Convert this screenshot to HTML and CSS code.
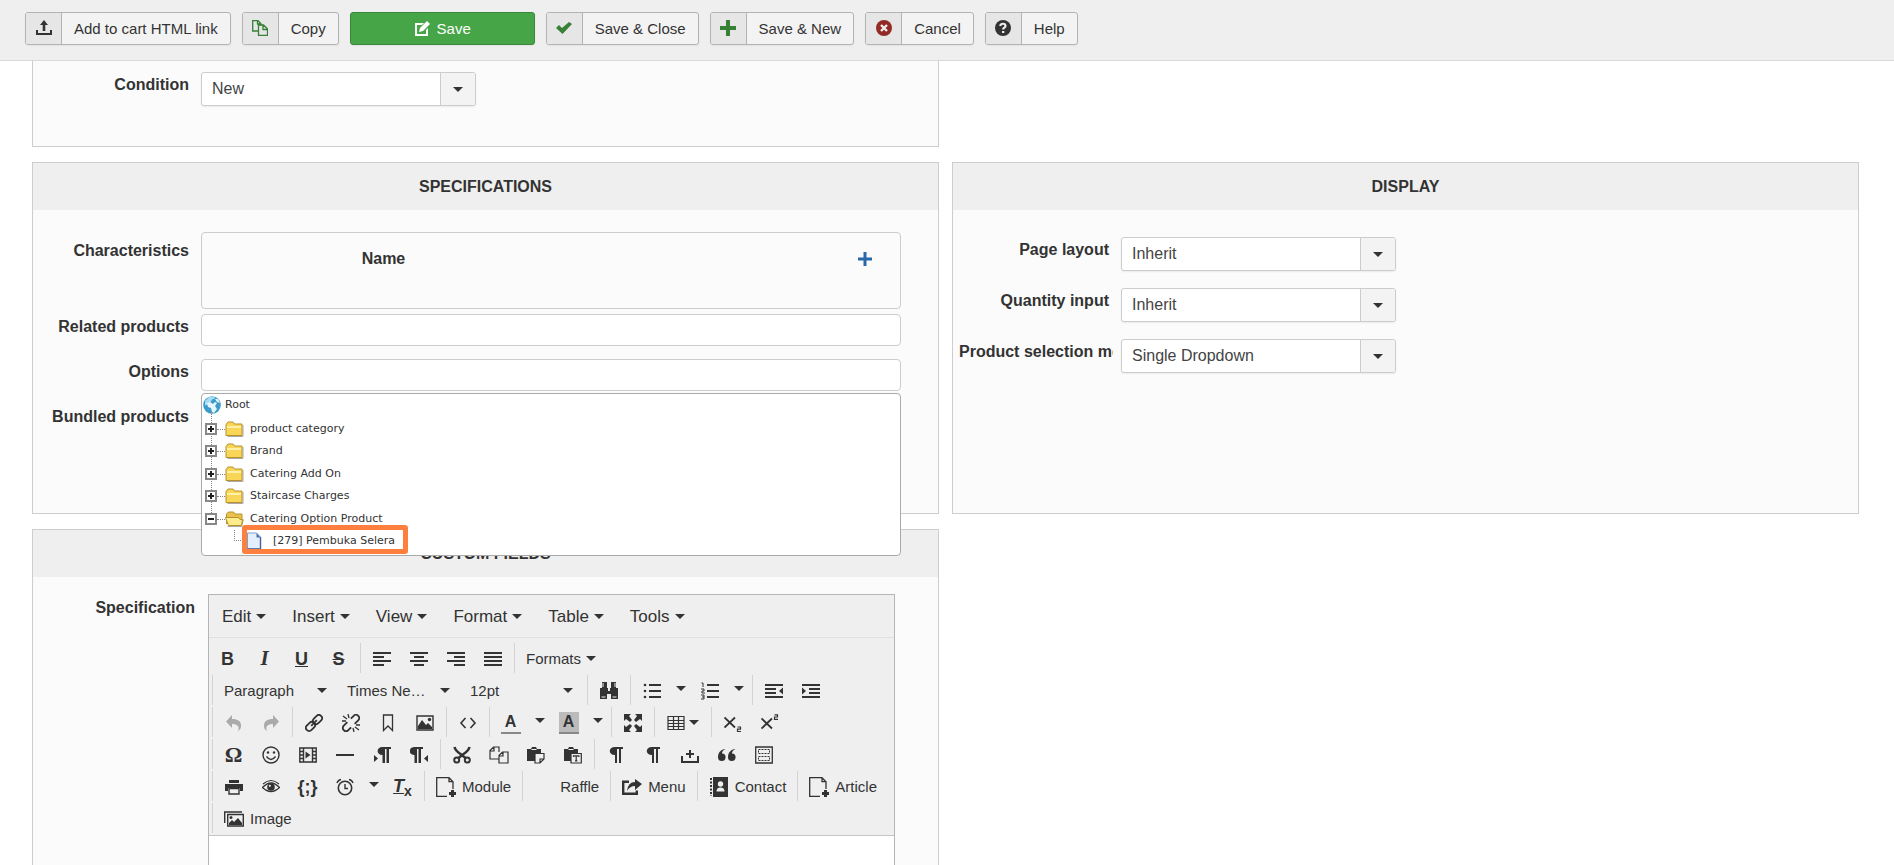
FILE: index.html
```html
<!DOCTYPE html>
<html lang="en">
<head>
<meta charset="utf-8">
<meta name="viewport" content="width=device-width, initial-scale=1">
<title>Edit product</title>
<link rel="stylesheet" href="styles.css">
</head>
<body>
<svg class="sprite" aria-hidden="true">
  <symbol id="upload" viewBox="0 0 16 16"><path d="M8 0l4 5H9.300v6H6.700V5H4zM0 10h2v3h12v-3h2v5H0z"/></symbol>
  <symbol id="copy" viewBox="0 0 16 16"><path d="M6 11H.7V.7H6l3 3V6M5.500.7V4H9M6.500 5h5l4 4v6.300h-9zM11 5v4.500h4.500" fill="none" stroke="currentColor" stroke-width="1.300"/></symbol>
  <symbol id="edit" viewBox="0 0 16 16"><path d="M1 2h9L8 4H3v9h9V9l2-2v8H1z"/><path d="M5 11l1-4 7-7 3 3-7 7z"/></symbol>
  <symbol id="check" viewBox="0 0 16 16"><path d="M0 8l3-3 3 3 7-6 3 2-9.500 10z"/></symbol>
  <symbol id="plus" viewBox="0 0 16 16"><path d="M6 0h4v6h6v4h-6v6H6v-6H0V6h6z"/></symbol>
  <symbol id="cancel" viewBox="0 0 16 16"><circle cx="8" cy="8" r="8"/><path d="M5 5l6 6M11 5l-6 6" stroke="#eee" stroke-width="2.400"/></symbol>
  <symbol id="help" viewBox="0 0 16 16"><circle cx="8" cy="8" r="8"/><path d="M5.300 6C5.300 3 10.500 3 10.500 6c0 1.600-2.400 1.600-2.400 3.500" fill="none" stroke="#eee" stroke-width="2.200"/><path d="M7 11h2.300v2H7z" fill="#eee"/></symbol>
  <symbol id="add" viewBox="0 0 14 14"><path d="M5.500 0h3v5.500H14v3H8.500V14h-3V8.500H0v-3h5.500z"/></symbol>

  <symbol id="globe" viewBox="0 0 18 18"><circle cx="9" cy="9" r="8.800" fill="#3b9ccb"/><path d="M2 5l4-4 5-.5 1 2-3 1-1 2-3 3-3 1z" fill="#a9dbf2"/><path d="M4 7l3-1 3 2 2-2 2 1-2 3 2 3-3 4-2-1-1-4-3-1zM12 3l3 0 2 4-3-1z" fill="#e6f6fd"/></symbol>
  <symbol id="folder" viewBox="0 0 18 16"><path d="M2 15.500h15.500V4" fill="none" stroke="#aaa"/><path d="M.5 3.500L2.500 1h5l1.500 2h7.500v11.500H.5z" fill="#f9d658" stroke="#b8912b"/><path d="M1.500 5h14v2h-14z" fill="#fff0a5"/></symbol>
  <symbol id="folder-open" viewBox="0 0 19 16"><path d="M2.500 15.500h14l2-7" fill="none" stroke="#aaa"/><path d="M1.500 13V3l2-2h5l1.500 2h7v10" fill="#e9c14c" stroke="#b8912b"/><path d="M.5 6.500h13l1.500 2h2.500l-1 6H3.500z" fill="#ffec8a" stroke="#b8912b"/></symbol>
  <symbol id="page" viewBox="0 0 16 18"><path d="M.5 1h9l4 4v12H.5z" fill="#e3effc" stroke="#7f9fcf"/><path d="M13.500 5v12H.5" fill="none" stroke="#45629a" stroke-width="1.400"/><path d="M9.500 1v4.500h4z" fill="#4a6fae"/></symbol>

  <symbol id="al" viewBox="0 0 18 18"><path d="M0 2h18v2H0zM0 6h11v2H0zM0 10h18v2H0zM0 14h11v2H0z"/></symbol>
  <symbol id="ac" viewBox="0 0 18 18"><path d="M0 2h18v2H0zM4 6h10v2H4zM0 10h18v2H0zM4 14h10v2H4z"/></symbol>
  <symbol id="ar" viewBox="0 0 18 18"><path d="M0 2h18v2H0zM7 6h11v2H7zM0 10h18v2H0zM7 14h11v2H7z"/></symbol>
  <symbol id="aj" viewBox="0 0 18 18"><path d="M0 2h18v2H0zM0 6h18v2H0zM0 10h18v2H0zM0 14h18v2H0z"/></symbol>
  <symbol id="find" viewBox="0 0 18 18"><path d="M2 0h5v6h1v3h2V6h1V0h5v6h2v11h-7v-5H7v5H0V6h2z"/><path d="M3 1v4M15 1v4M8 7h2M1.500 15h4M12.500 15h4" stroke="#efefef"/></symbol>
  <symbol id="ul" viewBox="0 0 18 18"><path d="M6 2h12v2H6zM6 8h12v2H6zM6 14h12v2H6z"/><circle cx="2" cy="3" r="1.300"/><circle cx="2" cy="9" r="1.300"/><circle cx="2" cy="15" r="1.300"/></symbol>
  <symbol id="ol" viewBox="0 0 18 18"><path d="M6 2h12v2H6zM6 8h12v2H6zM6 14h12v2H6z"/><path d="M.5 1H2v4M0 7h3v2H1v2h3M0 13h3v4H0M1 15h2" fill="none" stroke="currentColor"/></symbol>
  <symbol id="outdent" viewBox="0 0 18 18"><path d="M0 2h18v2H0zM0 6h11v2H0zM0 10h11v2H0zM0 14h18v2H0zM18 5.500v7L14 9z"/></symbol>
  <symbol id="indent" viewBox="0 0 18 18"><path d="M0 2h18v2H0zM7 6h11v2H7zM7 10h11v2H7zM0 14h18v2H0zM0 5.500v7L4 9z"/></symbol>
  <symbol id="undo" viewBox="0 0 18 18"><path d="M7 1v4c6 0 9 2 9 7 0 2-1 4-3 5 2-5-1-7-6-7v4L1 7.500z"/></symbol>
  <symbol id="redo" viewBox="0 0 18 18"><path d="M11 1v4c-6 0-9 2-9 7 0 2 1 4 3 5-2-5 1-7 6-7v4l6-6.500z"/></symbol>
  <symbol id="link" viewBox="0 0 18 18"><g transform="rotate(-45 9 9)" fill="none" stroke="currentColor" stroke-width="1.800"><rect x="-1" y="5.800" width="10" height="6.400" rx="3"/><rect x="9" y="5.800" width="10" height="6.400" rx="3"/><path d="M5 9h8"/></g></symbol>
  <symbol id="unlink" viewBox="0 0 18 18"><g transform="rotate(-45 9 9)" fill="none" stroke="currentColor" stroke-width="1.800"><path d="M7 5.800H2a3.200 3.200 0 0 0 0 6.400h4M11 12.200h5a3.200 3.200 0 0 0 0-6.400h-4"/></g><path d="M6 0l1 4M1 2l4 3M0 7h4M12 18l-1-4M17 16l-4-3M18 11h-4" stroke="currentColor" stroke-width="1.300"/></symbol>
  <symbol id="bookmark" viewBox="0 0 18 18"><path d="M4.500 1h9v15.500L9 12l-4.500 4.500z" fill="none" stroke="currentColor" stroke-width="1.300"/></symbol>
  <symbol id="image" viewBox="0 0 18 18"><path d="M1 2h16v14H1z" fill="none" stroke="currentColor" stroke-width="1.400"/><path d="M2 15V12l4-6 4 5 2-2 4 4v2z"/><circle cx="13.500" cy="5.500" r="1.700"/></symbol>
  <symbol id="code" viewBox="0 0 18 18"><path d="M6.500 4L2 9l4.500 5M11.500 4L16 9l-4.500 5" fill="none" stroke="currentColor" stroke-width="1.600"/></symbol>
  <symbol id="full" viewBox="0 0 18 18"><path d="M0 0h7L5 2l3 4-2 2-4-3-2 2zM18 0v7l-2-2-4 3-2-2 3-4-2-2zM0 18v-7l2 2 4-3 2 2-3 4 2 2zM18 18h-7l2-2-3-4 2-2 4 3 2-2z"/></symbol>
  <symbol id="table" viewBox="0 0 18 18"><path d="M1 2.500h16v13H1zM1 6.500h16M1 9.500h16M1 12.500h16M6.500 2v13M11.500 2v13" fill="none" stroke="currentColor" stroke-width="1.200"/></symbol>
  <symbol id="sub" viewBox="0 0 18 18"><path d="M.5 3.500l10.500 10M11 3.500l-10.500 10" stroke="currentColor" stroke-width="1.800"/><path d="M13.500 13h3v2.200h-3v2.300h3.500" fill="none" stroke="currentColor" stroke-width="1.200"/></symbol>
  <symbol id="sup" viewBox="0 0 18 18"><path d="M.5 4.500l10.500 10M11 4.500l-10.500 10" stroke="currentColor" stroke-width="1.800"/><path d="M13.500.8h3V3h-3v2.300h3.500" fill="none" stroke="currentColor" stroke-width="1.200"/></symbol>
  <symbol id="smile" viewBox="0 0 18 18"><circle cx="9" cy="9" r="8" fill="none" stroke="currentColor" stroke-width="1.400"/><circle cx="6" cy="6.500" r="1.200"/><circle cx="12" cy="6.500" r="1.200"/><path d="M4.500 10.500q4.500 6 9 0" fill="none" stroke="currentColor" stroke-width="1.300"/></symbol>
  <symbol id="media" viewBox="0 0 18 18"><path d="M.8 2h16.400v14H.8zM4.500 2v14M13.500 2v14M1 5.500h3.500M1 9h3.500M1 12.500h3.500M13.500 5.500H17M13.500 9H17M13.500 12.500H17" fill="none" stroke="currentColor" stroke-width="1.400"/><path d="M6.500 5.500l5 3.500-5 3.500z"/></symbol>
  <symbol id="hr" viewBox="0 0 18 18"><path d="M0 8h18v2H0z"/></symbol>
  <symbol id="pilcrow" viewBox="0 0 18 18"><path d="M16 1v2h-2v14h-2V3h-2v14H8V9C1 9 1 1 8 1z"/></symbol>
  <symbol id="ltr" viewBox="0 0 18 18"><path d="M18 1v2h-2v14h-2.500V3H12v14H9.500V9C3 9 3 1 9.500 1zM1 9l4 3.500L1 16z"/></symbol>
  <symbol id="rtl" viewBox="0 0 18 18"><path d="M13 1v2h-2v14H8.500V3H7v14H4.500V9C-2 9-2 1 4.500 1zM18 9l-4 3.500 4 3.500z"/></symbol>
  <symbol id="cut" viewBox="0 0 18 18"><path d="M1.500 1q1 4 6 7l5 4M16.500 1q-1 4-6 7l-5 4" fill="none" stroke="currentColor" stroke-width="2.600"/><circle cx="3.700" cy="14" r="2.500" fill="none" stroke="currentColor" stroke-width="2"/><circle cx="14.300" cy="14" r="2.500" fill="none" stroke="currentColor" stroke-width="2"/></symbol>
  <symbol id="docs" viewBox="0 0 20 18"><path d="M10 13H1V4.500L4.500 1H10v5M1 5h4V1M10 9.500L13.500 6H19v11h-9zM10 10h4V6" fill="none" stroke="currentColor" stroke-width="1.200"/></symbol>
  <symbol id="paste" viewBox="0 0 18 18"><path d="M0 3h4l1-2h4l1 2h4v4H8v8H0z"/><path d="M4.500 3.500h5" stroke="#efefef"/><path d="M8 7.500h9V13l-4 4H8zM13 17v-4h4" fill="#efefef" stroke="currentColor" stroke-width="1.200"/></symbol>
  <symbol id="pastetext" viewBox="0 0 18 18"><path d="M0 3h4l1-2h4l1 2h4v4H7v8H0z"/><path d="M4.500 3.500h5" stroke="#efefef"/><path d="M7 7.500h10.300V17H7z" fill="#efefef" stroke="currentColor" stroke-width="1.200"/><path d="M9.500 11V9.800h5.400V11M12.200 10v5M11 14.800h2.400" fill="none" stroke="currentColor" stroke-width="1.200"/></symbol>
  <symbol id="nbsp" viewBox="0 0 18 18"><path d="M0 10h2v5h14v-5h2v7H0zM8 4h2v3h3v2h-3v3H8V9H5V7h3z"/></symbol>
  <symbol id="quote" viewBox="0 0 18 18"><path d="M7.500 3C5 4 4 6 4 7.500a3.800 3.800 0 1 1-4 4C0 6 3 3.500 7.500 3zM17.500 3C15 4 14 6 14 7.500a3.800 3.800 0 1 1-4 4c0-5.500 3-8 7.500-8.500z"/></symbol>
  <symbol id="template" viewBox="0 0 18 18"><path d="M.7 1h16.600v16H.7z" fill="none" stroke="currentColor" stroke-width="1.300"/><path d="M3.500 3.500h11v4h-11zM3.500 10.500h11v4h-11z" fill="none" stroke="currentColor" stroke-dasharray="2 1"/></symbol>
  <symbol id="print" viewBox="0 0 18 18"><path d="M4 2h10v3H4zM0 6h18v7h-3v-3H3v3H0z"/><path d="M4 10.500h10V16H4z" fill="#efefef" stroke="currentColor" stroke-width="1.400"/></symbol>
  <symbol id="eye" viewBox="0 0 18 18"><path d="M.5 9.500q8.500-9 17 0-8.500 8-17 0z" fill="none" stroke="currentColor" stroke-width="1.300"/><path d="M1 6q8-7 16 0" fill="none" stroke="currentColor" stroke-width="1.100"/><circle cx="9" cy="9" r="3.800"/><circle cx="7.800" cy="7.800" r="1.100" fill="#efefef"/></symbol>
  <symbol id="clock" viewBox="0 0 18 18"><circle cx="9" cy="10" r="6.700" fill="none" stroke="currentColor" stroke-width="1.600"/><path d="M9 6v4.500h3M1 5q1-3 4-3.500M17 5q-1-3-4-3.500" fill="none" stroke="currentColor" stroke-width="1.400"/></symbol>
  <symbol id="file-add" viewBox="0 0 20 20"><path d="M11 19.300H.7V.7H13l4 4V12M13 .7v4h4" fill="none" stroke="currentColor" stroke-width="1.300"/><path d="M15 13h3v2h2v3h-2v2h-3v-2h-2v-3h2z"/></symbol>
  <symbol id="share" viewBox="0 0 20 20"><path d="M7 4.700H1.200v12.100h13.600v-3.300" fill="none" stroke="currentColor" stroke-width="2.400"/><path d="M13 2l7 5-7 6V9q-5 0-8 5Q6 5 13 5z"/></symbol>
  <symbol id="contact" viewBox="0 0 20 20"><path d="M4 0h15v20H4z"/><path d="M2 1v18" stroke="currentColor" stroke-width="2" stroke-dasharray="2 1.500"/><circle cx="11.500" cy="7" r="2.700" fill="#efefef"/><path d="M7.500 14.500q0-4 4-4t4 4z" fill="#efefef"/></symbol>
  <symbol id="pictures" viewBox="0 0 20 20"><path d="M.7 14V3H18" fill="none" stroke="currentColor" stroke-width="1.400"/><path d="M3.700 5.500h15.600V17H3.700z" fill="none" stroke="currentColor" stroke-width="1.400"/><path d="M5 16v-2l3-3 2 2 4-4 4 5v2z"/><circle cx="7" cy="8.500" r="1.500"/></symbol>
</svg>

<header class="toolbar">
  <button class="btn" type="button"><span class="btn-icon"><svg><use href="#upload"/></svg></span><span class="btn-text">Add to cart HTML link</span></button>
  <button class="btn" type="button"><span class="btn-icon green"><svg><use href="#copy"/></svg></span><span class="btn-text">Copy</span></button>
  <button class="btn btn-save" type="button"><svg><use href="#edit"/></svg>Save</button>
  <button class="btn" type="button"><span class="btn-icon green"><svg><use href="#check"/></svg></span><span class="btn-text">Save &amp; Close</span></button>
  <button class="btn" type="button"><span class="btn-icon green"><svg><use href="#plus"/></svg></span><span class="btn-text">Save &amp; New</span></button>
  <button class="btn" type="button"><span class="btn-icon red"><svg><use href="#cancel"/></svg></span><span class="btn-text">Cancel</span></button>
  <button class="btn" type="button"><span class="btn-icon"><svg><use href="#help"/></svg></span><span class="btn-text">Help</span></button>
</header>

<main class="columns">
  <section class="panel panel-condition">
    <div class="row">
      <label class="label" for="condition">Condition</label>
      <div class="select"><select id="condition"><option>New</option></select><span class="select-arrow"><i class="caret"></i></span></div>
    </div>
  </section>

  <section class="panel panel-spec">
    <h2 class="panel-title">SPECIFICATIONS</h2>
    <div class="row row-tall">
      <span class="label">Characteristics</span>
      <div class="field box">
        <table class="chars"><tr><th class="chars-name">Name</th><th></th><th class="chars-add"><button class="add" type="button" aria-label="Add"><svg><use href="#add"/></svg></button></th></tr></table>
      </div>
    </div>
    <div class="row">
      <label class="label" for="related">Related products</label>
      <div class="field"><input class="text" id="related" type="text"></div>
    </div>
    <div class="row">
      <label class="label" for="options">Options</label>
      <div class="field">
        <input class="text" id="options" type="text">
        <div class="tree">
          <div class="tree-root"><svg class="globe"><use href="#globe"/></svg>Root</div>
          <ul class="tree-list">
            <li class="node"><span class="join"><i class="toggle plus"></i></span><svg class="folder"><use href="#folder"/></svg>product category</li>
            <li class="node"><span class="join"><i class="toggle plus"></i></span><svg class="folder"><use href="#folder"/></svg>Brand</li>
            <li class="node"><span class="join"><i class="toggle plus"></i></span><svg class="folder"><use href="#folder"/></svg>Catering Add On</li>
            <li class="node"><span class="join"><i class="toggle plus"></i></span><svg class="folder"><use href="#folder"/></svg>Staircase Charges</li>
            <li class="node"><span class="join"><i class="toggle"></i></span><svg class="folder"><use href="#folder-open"/></svg>Catering Option Product</li>
            <li class="node"><span class="elbow"></span><svg class="page"><use href="#page"/></svg>[279] Pembuka Selera<span class="highlight"></span></li>
          </ul>
        </div>
      </div>
    </div>
    <div class="row"><span class="label">Bundled products</span></div>
  </section>

  <section class="panel panel-display">
    <h2 class="panel-title">DISPLAY</h2>
    <div class="row row-select">
      <label class="label" for="layout">Page layout</label>
      <div class="select"><select id="layout"><option>Inherit</option></select><span class="select-arrow"><i class="caret"></i></span></div>
    </div>
    <div class="row row-select">
      <label class="label" for="quantity">Quantity input</label>
      <div class="select"><select id="quantity"><option>Inherit</option></select><span class="select-arrow"><i class="caret"></i></span></div>
    </div>
    <div class="row row-select">
      <label class="label" for="method">Product selection method</label>
      <div class="select"><select id="method"><option>Single Dropdown</option></select><span class="select-arrow"><i class="caret"></i></span></div>
    </div>
  </section>

  <section class="panel panel-custom">
    <h2 class="panel-title">CUSTOM FIELDS</h2>
    <div class="editor-row">
      <label class="label" for="spec">Specification</label>
      <div class="editor">
        <div class="menubar">
          <button type="button">Edit<i class="caret"></i></button><button type="button">Insert<i class="caret"></i></button><button type="button">View<i class="caret"></i></button><button type="button">Format<i class="caret"></i></button><button type="button">Table<i class="caret"></i></button><button type="button">Tools<i class="caret"></i></button>
        </div>
        <div class="tools">
          <div class="line line-first">
            <div class="group"><button class="ic" type="button"><b>B</b></button><button class="ic serif" type="button"><i>I</i></button><button class="ic" type="button"><u>U</u></button><button class="ic" type="button"><s>S</s></button></div>
            <div class="group"><button class="ic" type="button"><svg><use href="#al"/></svg></button><button class="ic" type="button"><svg><use href="#ac"/></svg></button><button class="ic" type="button"><svg><use href="#ar"/></svg></button><button class="ic" type="button"><svg><use href="#aj"/></svg></button></div>
            <div class="group"><button class="word" type="button">Formats<i class="caret"></i></button></div>
          </div>
          <div class="line">
            <div class="group"><button class="list" type="button">Paragraph<i class="caret"></i></button><button class="list" type="button">Times Ne…<i class="caret"></i></button><button class="list" type="button">12pt<i class="caret"></i></button></div>
            <div class="group"><button class="ic" type="button"><svg><use href="#find"/></svg></button></div>
            <div class="group"><button class="ic" type="button"><svg><use href="#ul"/></svg></button><button class="open" type="button"><i class="caret"></i></button><button class="ic" type="button"><svg><use href="#ol"/></svg></button><button class="open" type="button"><i class="caret"></i></button></div>
            <div class="group"><button class="ic" type="button"><svg><use href="#outdent"/></svg></button><button class="ic" type="button"><svg><use href="#indent"/></svg></button></div>
          </div>
          <div class="line">
            <div class="group"><button class="ic off" type="button"><svg><use href="#undo"/></svg></button><button class="ic off" type="button"><svg><use href="#redo"/></svg></button></div>
            <div class="group"><button class="ic" type="button"><svg><use href="#link"/></svg></button><button class="ic" type="button"><svg><use href="#unlink"/></svg></button><button class="ic" type="button"><svg><use href="#bookmark"/></svg></button><button class="ic" type="button"><svg><use href="#image"/></svg></button></div>
            <div class="group"><button class="ic" type="button"><svg><use href="#code"/></svg></button></div>
            <div class="group"><button class="ic" type="button"><span class="color">A</span></button><button class="open" type="button"><i class="caret"></i></button><button class="ic" type="button"><span class="color back">A</span></button><button class="open" type="button"><i class="caret"></i></button></div>
            <div class="group"><button class="ic" type="button"><svg><use href="#full"/></svg></button></div>
            <div class="group"><button class="ic wide" type="button"><svg><use href="#table"/></svg><i class="caret"></i></button></div>
            <div class="group"><button class="ic" type="button"><svg><use href="#sub"/></svg></button><button class="ic" type="button"><svg><use href="#sup"/></svg></button></div>
          </div>
          <div class="line">
            <div class="group"><button class="ic omega" type="button">Ω</button><button class="ic" type="button"><svg><use href="#smile"/></svg></button><button class="ic" type="button"><svg><use href="#media"/></svg></button><button class="ic" type="button"><svg><use href="#hr"/></svg></button><button class="ic" type="button"><svg><use href="#ltr"/></svg></button><button class="ic" type="button"><svg><use href="#rtl"/></svg></button></div>
            <div class="group"><button class="ic" type="button"><svg><use href="#cut"/></svg></button><button class="ic docs" type="button"><svg><use href="#docs"/></svg></button><button class="ic" type="button"><svg><use href="#paste"/></svg></button><button class="ic" type="button"><svg><use href="#pastetext"/></svg></button></div>
            <div class="group"><button class="ic" type="button"><svg><use href="#pilcrow"/></svg></button><button class="ic" type="button"><svg><use href="#pilcrow"/></svg></button><button class="ic" type="button"><svg><use href="#nbsp"/></svg></button><button class="ic" type="button"><svg><use href="#quote"/></svg></button><button class="ic" type="button"><svg><use href="#template"/></svg></button></div>
          </div>
          <div class="line">
            <div class="group"><button class="ic" type="button"><svg><use href="#print"/></svg></button><button class="ic" type="button"><svg><use href="#eye"/></svg></button><button class="ic braces" type="button">{;}</button><button class="ic" type="button"><svg><use href="#clock"/></svg></button><button class="open" type="button"><i class="caret"></i></button><button class="ic clear" type="button"><u><i>T</i></u><sub>x</sub></button></div>
            <div class="group"><button class="plugin" type="button"><svg><use href="#file-add"/></svg>Module</button></div>
            <div class="group"><button class="plugin" type="button"><svg></svg>Raffle</button></div>
            <div class="group"><button class="plugin" type="button"><svg><use href="#share"/></svg>Menu</button></div>
            <div class="group"><button class="plugin" type="button"><svg><use href="#contact"/></svg>Contact</button></div>
            <div class="group"><button class="plugin" type="button"><svg><use href="#file-add"/></svg>Article</button></div>
          </div>
          <div class="line">
            <div class="group"><button class="plugin" type="button"><svg><use href="#pictures"/></svg>Image</button></div>
          </div>
        </div>
        <textarea class="editor-text" id="spec"></textarea>
      </div>
    </div>
  </section>
</main>
</body>
</html>
```

FILE: styles.css
```css
* { box-sizing: border-box; }

body {
  margin: 0;
  height: 100vh;
  overflow: hidden;
  background: #fff;
  color: #333;
  font: 16px/20px "Liberation Sans", Arial, sans-serif;
}

button, select, input, textarea { margin: 0; font: inherit; color: inherit; }
button { padding: 0; border: 0; background: none; }
svg { display: block; flex: none; fill: currentColor; }
.sprite { position: absolute; width: 0; height: 0; }

.caret {
  flex: none;
  width: 0;
  border: 5px solid transparent;
  border-top-color: #333;
  border-bottom: 0;
}

/* Action bar */
.toolbar {
  display: flex;
  gap: 11px;
  padding: 12px 25px 15px;
  background: #efefef;
  border-bottom: 1px solid #d9d9d9;
}
.btn {
  display: flex;
  height: 33px;
  border: 1px solid #b3b3b3;
  border-radius: 3px;
  overflow: hidden;
  background: #f3f3f3;
  box-shadow: 0 1px 2px rgba(0, 0, 0, .05);
  font-size: 15px;
  line-height: 31px;
}
.btn svg { width: 16px; height: 16px; }
.btn-icon {
  display: flex;
  justify-content: center;
  width: 36px;
  height: 31px;
  padding-top: 7px;
  border-right: 1px solid #b3b3b3;
  background: #e6e6e6;
}
.btn-text { padding: 0 12px; }
.green { color: #378137; }
.red { color: #942a25; }
.btn-save {
  justify-content: center;
  align-items: center;
  gap: 7px;
  width: 185px;
  border-color: #3a873a;
  background: #46a546;
  color: #fff;
}

/* Panels */
.columns {
  display: grid;
  grid-template-columns: 1fr 1fr;
  gap: 15px 13px;
  padding: 0 35px 0 32px;
}
.panel { border: 1px solid #cdcdcd; background: #fbfbfb; min-width: 0; }
.panel-condition { grid-column: 1; height: 86px; border-top: 0; padding-top: 11px; }
.panel-spec { grid-column: 1; height: 352px; }
.panel-display { grid-column: 2; }
.panel-custom { grid-column: 1; border-bottom: 0; }
.panel-title {
  margin: 0;
  height: 47px;
  background: #efefef;
  font-size: 16px;
  line-height: 47px;
  text-align: center;
}

.row { display: flex; gap: 8px; margin: 0 37px 13px 6px; }
.row-tall { margin-top: 22px; margin-bottom: 5px; }
.row-tall .label { padding-top: 9px; }
.row-select { margin-bottom: 17px; }
.panel-title + .row-select { margin-top: 27px; }
.label {
  flex: none;
  width: 154px;
  padding: 3px 4px 0 0;
  overflow: hidden;
  font-weight: bold;
  text-align: right;
  white-space: nowrap;
}
.field { position: relative; flex: 1; }
.box { height: 77px; border: 1px solid #ccc; border-radius: 4px; }
.text {
  display: block;
  width: 100%;
  height: 32px;
  padding: 4px 6px;
  border: 1px solid #ccc;
  border-radius: 4px;
  background: #fff;
}
.chars { width: 100%; margin-top: 16px; border-collapse: collapse; }
.chars th { padding: 0; }
.chars-name { width: 52%; }
.chars-add { width: 70px; }
.add { display: block; margin: auto; color: #2a69a8; }
.add svg { width: 14px; height: 14px; }

.select { position: relative; width: 275px; height: 34px; }
.select select {
  display: block;
  width: 100%;
  height: 100%;
  padding: 0 40px 0 10px;
  appearance: none;
  border: 1px solid #ccc;
  border-radius: 3px;
  background: #fff;
  box-shadow: 0 1px 2px rgba(0, 0, 0, .07);
  color: #444;
}
.select-arrow {
  position: absolute;
  top: 1px;
  right: 1px;
  bottom: 1px;
  display: flex;
  align-items: center;
  justify-content: center;
  width: 35px;
  border-left: 1px solid #ccc;
  border-radius: 0 2px 2px 0;
  background: #f3f3f3;
  pointer-events: none;
}

/* Category tree */
.tree {
  position: absolute;
  z-index: 2;
  top: 34px;
  left: 0;
  width: 100%;
  height: 163px;
  padding: 0 1px;
  border: 1px solid #aaa;
  border-radius: 4px;
  background: #fff;
  font: 11px/22px "DejaVu Sans", Verdana, sans-serif;
}
.tree-root { display: flex; align-items: center; gap: 4px; height: 22px; }
.globe { width: 18px; height: 18px; }
.tree-list { margin: 0; padding: 1px 0 0; list-style: none; }
.node { position: relative; display: flex; align-items: center; height: 22px; }
.node:nth-child(odd) { margin-top: 1px; }
.join {
  position: relative;
  display: flex;
  align-items: center;
  width: 22px;
  height: 22px;
  padding-left: 2px;
}
.join::before {
  content: "";
  position: absolute;
  top: -7px;
  left: 8px;
  height: 18px;
  border-left: 1px dotted #888;
}
.join::after { content: ""; flex: 1; border-top: 1px dotted #888; }
.toggle {
  position: relative;
  width: 12px;
  height: 12px;
  border: 2px solid #888;
  background: linear-gradient(#222, #222) center / 6px 2px no-repeat #fff;
}
.toggle.plus {
  background:
    linear-gradient(#222, #222) center / 6px 2px no-repeat,
    linear-gradient(#222, #222) center / 2px 6px no-repeat,
    #fff;
}
.folder { width: 19px; height: 16px; margin-right: 6px; }
.elbow {
  align-self: flex-start;
  width: 9px;
  height: 11px;
  margin: 0 4px 0 31px;
  border: 1px dotted #888;
  border-width: 0 0 1px 1px;
}
.page { width: 16px; height: 18px; margin-right: 10px; }
.highlight {
  position: absolute;
  top: -5px;
  left: 39px;
  width: 166px;
  height: 29px;
  border: 5px solid #ff7f3f;
  border-radius: 3px;
}

/* Rich text editor */
.editor-row { display: flex; gap: 13px; margin: 17px 43px 0 6px; }
.editor-row .label { width: 156px; padding-right: 0; padding-top: 4px; }
.editor {
  flex: 1;
  min-width: 0;
  border: 1px solid #b5b5b5;
  border-bottom: 0;
  background: #efefef;
}
.menubar {
  display: flex;
  height: 43px;
  border-bottom: 1px solid #e0e0e0;
  font-size: 17px;
}
.menubar button { display: flex; align-items: center; gap: 5px; padding: 1px 13px 0; }
.tools {
  display: flex;
  flex-direction: column;
  gap: 2px;
  padding: 5px 0 2px 3px;
  border-bottom: 1px solid #c5c5c5;
  font-size: 15px;
}
.line { display: flex; height: 30px; }
.group { display: flex; padding: 0 3px 0 2px; border-left: 1px solid #d3d3d3; }
.line-first { margin-left: -3px; }
.line-first .group:first-child { padding-left: 0; border-left: 0; }
.group button { display: flex; align-items: center; padding-top: 1px; white-space: nowrap; }
.group .ic { justify-content: center; width: 37px; font-size: 18px; }
.ic svg { width: 18px; height: 18px; }
.docs svg { width: 20px; }
.group .wide { gap: 4px; width: 51px; }
.ic s, .ic u { font-weight: bold; }
.group .serif { font: bold 21px "Liberation Serif", serif; }
.group .word { gap: 5px; padding: 1px 9px 0; }
.group .list { justify-content: space-between; width: 123px; padding: 1px 11px 0 9px; }
.group .open { justify-content: center; width: 21px; padding-bottom: 5px; }
.group .off { color: #aaa; }
.color {
  width: 20px;
  height: 22px;
  border-bottom: 2px solid #888;
  font: bold 16px/20px "Liberation Sans", sans-serif;
}
.color.back { background: #bbb; }
.group .omega { font: bold 22px "Liberation Serif", serif; }
.group .braces { font-weight: bold; }
.group .clear { font: bold 18px "Liberation Sans", sans-serif; }
.clear sub { font-size: 14px; line-height: 20px; align-self: flex-end; }
.group .plugin { gap: 6px; padding: 1px 8px 0 9px; }
.plugin svg { width: 20px; height: 20px; }
.editor-text {
  display: block;
  width: 100%;
  height: 29px;
  border: 0;
  background: #fff;
  resize: none;
}
```
